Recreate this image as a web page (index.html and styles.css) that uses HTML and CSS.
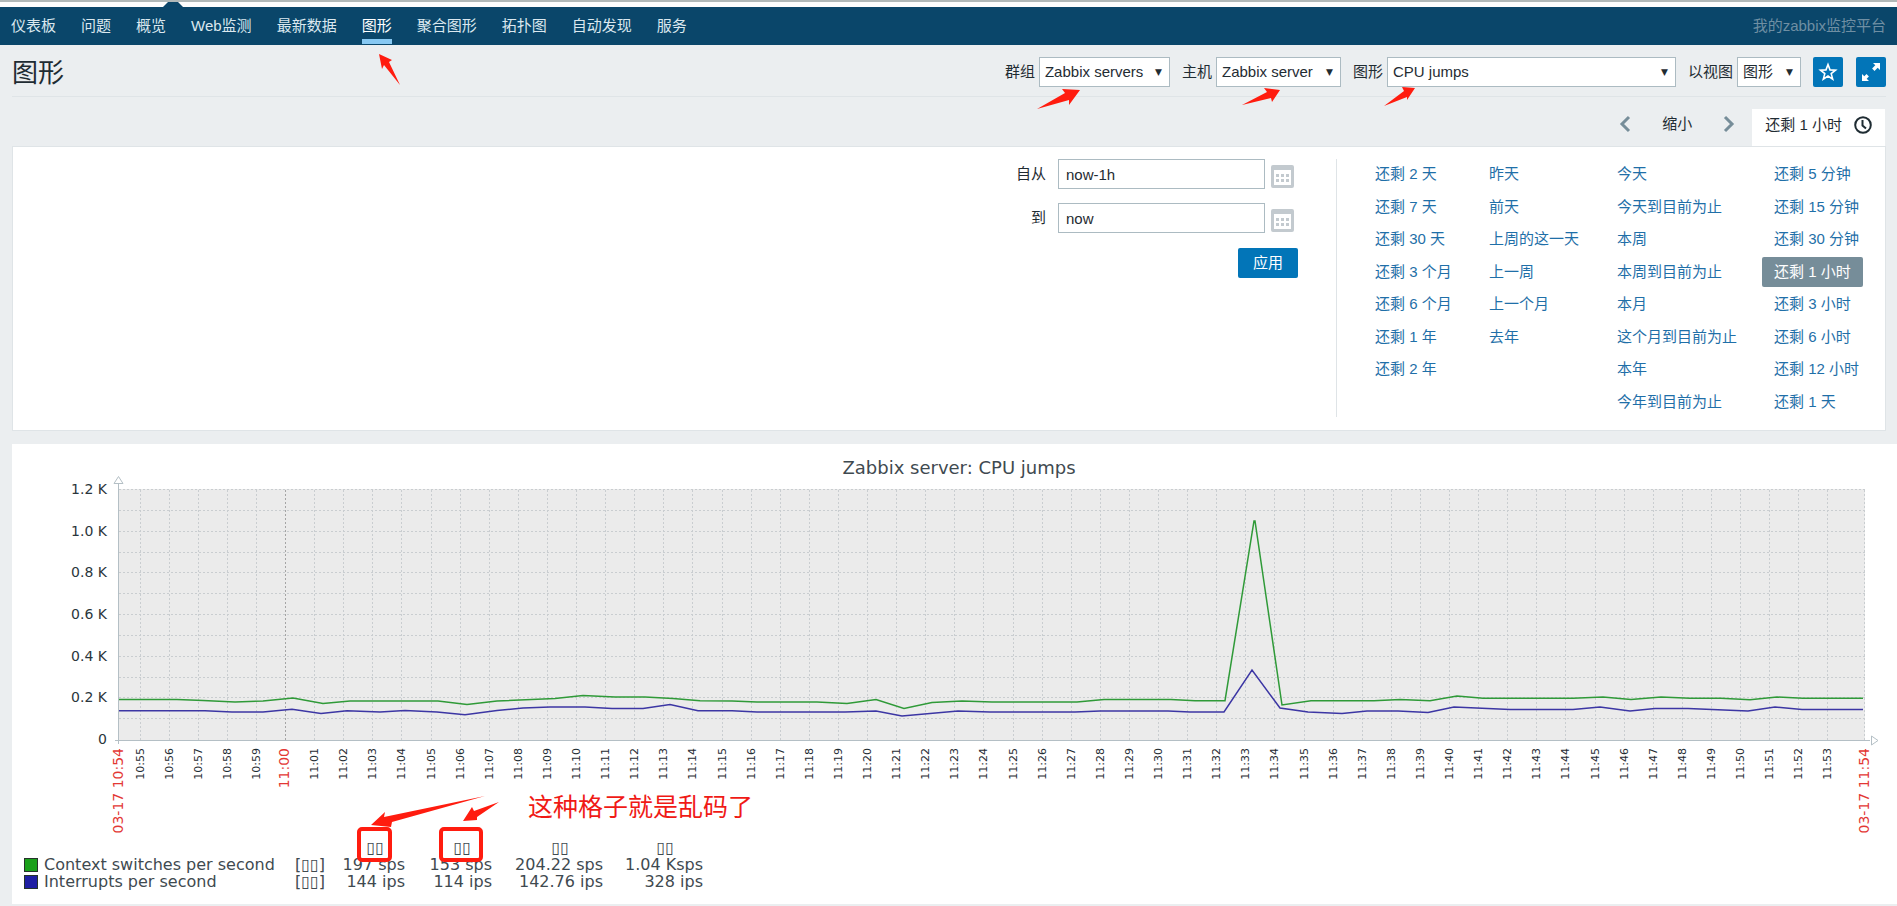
FILE: index.html
```html
<!DOCTYPE html>
<html lang="zh-CN">
<head>
<meta charset="utf-8">
<title>图形</title>
<link rel="stylesheet" href="styles.css">
</head>
<body>
<div class="top-strip"><span class="top-marker"></span></div>
<nav class="nav">
  <a href="#">仪表板</a>
  <a href="#">问题</a>
  <a href="#">概览</a>
  <a href="#">Web监测</a>
  <a href="#">最新数据</a>
  <a href="#" class="current">图形</a>
  <a href="#">聚合图形</a>
  <a href="#">拓扑图</a>
  <a href="#">自动发现</a>
  <a href="#">服务</a>
  <span class="server-name">我的zabbix监控平台</span>
</nav>

<header class="page-header">
  <h1>图形</h1>
  <form class="controls">
    <label for="group">群组</label>
    <span class="select select-group"><select id="group"><option>Zabbix servers</option></select></span>
    <label for="host">主机</label>
    <span class="select select-host"><select id="host"><option>Zabbix server</option></select></span>
    <label for="graph">图形</label>
    <span class="select select-graph"><select id="graph"><option>CPU jumps</option></select></span>
    <label for="view">以视图</label>
    <span class="select select-view"><select id="view"><option>图形</option></select></span>
    <button type="button" class="icon-button" aria-label="收藏">
      <svg width="20" height="20" viewBox="0 0 20 20"><path d="M10 2.500l2 5.400 5.500.2-4.300 3.500 1.500 5.500L10 14l-4.700 3.100 1.500-5.500L2.500 8.100l5.500-.2z" fill="none" stroke="#fff" stroke-width="1.600"/></svg>
    </button>
    <button type="button" class="icon-button" aria-label="全屏">
      <svg width="20" height="20" viewBox="0 0 20 20" fill="#fff"><path d="M12 1h7v7l-2.300-2.300-3.200 3.200-2.400-2.400 3.200-3.200z"/><path d="M8 19H1v-7l2.300 2.300 2.200-2.200 2.400 2.400-2.200 2.200z"/></svg>
    </button>
  </form>
</header>

<main>
  <div class="time-tabs">
    <button type="button" class="plain" aria-label="向前"><svg width="12" height="18" viewBox="0 0 12 18"><path d="M10 2L3 9l7 7" fill="none" stroke="#768d99" stroke-width="3"/></svg></button>
    <button type="button" class="plain zoom-out">缩小</button>
    <button type="button" class="plain" aria-label="向后"><svg width="12" height="18" viewBox="0 0 12 18"><path d="M2 2l7 7-7 7" fill="none" stroke="#768d99" stroke-width="3"/></svg></button>
    <button type="button" class="tab">还剩 1 小时
      <svg width="18" height="18" viewBox="0 0 18 18" fill="none" stroke="#1f2c33" stroke-width="2"><circle cx="9" cy="9" r="7.800"/><path d="M8.500 4v5.500l3.500 3"/></svg>
    </button>
  </div>

  <section class="filter">
    <form class="range">
      <label for="from">自从</label>
      <input id="from" type="text" value="now-1h">
      <button type="button" class="calendar" aria-label="日历"><svg width="23" height="23" viewBox="0 0 23 23"><use href="#cal"/></svg></button>
      <label for="to">到</label>
      <input id="to" type="text" value="now">
      <button type="button" class="calendar" aria-label="日历"><svg width="23" height="23" viewBox="0 0 23 23"><use href="#cal"/></svg></button>
      <button type="button" class="apply">应用</button>
    </form>
    <div class="periods">
      <ul class="col-a">
        <li><a href="#">还剩 2 天</a></li><li><a href="#">还剩 7 天</a></li><li><a href="#">还剩 30 天</a></li><li><a href="#">还剩 3 个月</a></li><li><a href="#">还剩 6 个月</a></li><li><a href="#">还剩 1 年</a></li><li><a href="#">还剩 2 年</a></li>
      </ul>
      <ul class="col-b">
        <li><a href="#">昨天</a></li><li><a href="#">前天</a></li><li><a href="#">上周的这一天</a></li><li><a href="#">上一周</a></li><li><a href="#">上一个月</a></li><li><a href="#">去年</a></li>
      </ul>
      <ul class="col-c">
        <li><a href="#">今天</a></li><li><a href="#">今天到目前为止</a></li><li><a href="#">本周</a></li><li><a href="#">本周到目前为止</a></li><li><a href="#">本月</a></li><li><a href="#">这个月到目前为止</a></li><li><a href="#">本年</a></li><li><a href="#">今年到目前为止</a></li>
      </ul>
      <ul class="col-d">
        <li><a href="#">还剩 5 分钟</a></li><li><a href="#">还剩 15 分钟</a></li><li><a href="#">还剩 30 分钟</a></li><li><a href="#" class="selected">还剩 1 小时</a></li><li><a href="#">还剩 3 小时</a></li><li><a href="#">还剩 6 小时</a></li><li><a href="#">还剩 12 小时</a></li><li><a href="#">还剩 1 天</a></li>
      </ul>
    </div>
  </section>

  <section class="graph">
    <svg class="chart" viewBox="12 444 1885 395">
      <text class="chart-title" x="959" y="474">Zabbix server: CPU jumps</text>
      <rect x="119" y="489" width="1746" height="251" fill="#ebebeb"/>
      <g id="grid"></g>
      <path class="axis" d="M118.500 484V744M115 740.500H1870"/>
      <path class="axis-tip" d="M114 483.500h9l-4.500-7zM1871.500 736v9l6.500-4.500z"/>
      <g id="labels"></g>
      <polyline class="series green" points="119,699.5 177,699.5 203,700.5 235,702 263,701 293,698 323,703.5 350,701 438,701 467,704.5 497,701 555,698.5 583,695.6 615,697 645,697 673,698.5 700,700.7 732,701 757,702 817,702 847,703.5 876,699.5 904,708.5 932,702.5 962,701 992,702 1077,702 1104,699.5 1171,699.5 1195,700.7 1225,700.7 1254,521 1255,521 1282,705 1311,700.7 1374,700.7 1400,699.5 1430,700.7 1457,696 1483,698.3 1573,698.3 1603,697 1631,699.5 1661,697 1690,698.3 1721,698.3 1750,699.7 1777,697 1803,698.3 1863,698.3"/>
      <polyline class="series blue" points="119,710.7 205,710.7 232,712 263,712 292,709.3 321,713.5 347,710.7 380,712 405,710.5 437,712 465,714.7 497,710.5 523,708 550,707 585,707 612,708.5 643,708.5 670,704.5 698,710.7 732,710.7 757,712 845,712 876,711 902,716 930,713.5 958,711 990,712 1075,712 1100,711 1168,711 1190,712 1224,712 1252,670 1280,708 1308,712 1342,713.5 1367,711 1398,711 1428,712.5 1454,707 1510,709.5 1573,709.5 1600,707 1630,711 1655,708.5 1688,708.5 1748,711 1775,707 1802,709.5 1863,709.5"/>
    </svg>
    <table class="legend">
      <thead><tr><th class="name"></th><th class="kind"></th><th class="v1">▯▯</th><th class="v2">▯▯</th><th class="v3">▯▯</th><th class="v4">▯▯</th></tr></thead>
      <tbody>
        <tr><td><span class="swatch swatch-green"></span>Context switches per second</td><td>[▯▯]</td><td class="num">197 sps</td><td class="num">153 sps</td><td class="num">204.22 sps</td><td class="num">1.04 Ksps</td></tr>
        <tr><td><span class="swatch swatch-blue"></span>Interrupts per second</td><td>[▯▯]</td><td class="num">144 ips</td><td class="num">114 ips</td><td class="num">142.76 ips</td><td class="num">328 ips</td></tr>
      </tbody>
    </table>
  </section>
</main>

<svg class="notes" viewBox="0 0 1897 906">
  <defs>
    <g id="cal"><path fill="#c3cacf" fill-rule="evenodd" d="M2 0h19a2 2 0 0 1 2 2v19a2 2 0 0 1-2 2H2a2 2 0 0 1-2-2V2a2 2 0 0 1 2-2zM3 5v15h17V5z"/><path fill="#c3cacf" d="M5 9h3v3H5zM10 9h3v3h-3zM15 9h3v3h-3zM5 14h3v3H5zM10 14h3v3h-3zM15 14h3v3h-3z"/></g>
  </defs>
  <g fill="#ff1c0f">
    <path d="M379 54l13 6-3 2 11 23-16-20-2 4z"/>
    <path d="M1080 90l-18-1 3 4-28 16 32-9v5z"/>
    <path d="M1280 90l-16-2 3 4-25 13 29-7 1 4z"/>
    <path d="M1415 88l-13-1 2 4-20 15 23-9v3z"/>
    <path d="M371 825l14-13-1 5 101-21-93 26-1 5z"/>
    <path d="M463 821l9-14 2 4 25-9-22 15v3z"/>
  </g>
  <g fill="none" stroke="#ff1c0f" stroke-width="4"><rect x="359" y="829" width="31" height="31" rx="3"/><rect x="441" y="829" width="40" height="31" rx="3"/></g>
  <text class="note" x="528" y="816">这种格子就是乱码了</text>
</svg>
<script src="script.js"></script>
</body>
</html>
```
FILE: styles.css
```css
* { box-sizing: border-box; }

body {
  margin: 0;
  position: relative;
  background: #ebeef0;
  color: #1f2c33;
  font: 15px/20px "Liberation Sans", "Noto Sans CJK SC", sans-serif;
}

button, input, select { font: inherit; color: inherit; }
a { text-decoration: none; }

.top-strip {
  position: relative;
  height: 7px;
  background: #fcfdfd;
  border-top: 2px solid #b0b8b8;
}
.top-marker {
  position: absolute;
  left: 163px;
  bottom: 0;
  width: 20px;
  height: 5px;
  background: #0a466a;
  clip-path: polygon(25% 0, 75% 0, 100% 100%, 0 100%);
}

.nav {
  display: flex;
  gap: 25px;
  height: 38px;
  padding: 0 11px;
  background: #0a466a;
}
.nav a {
  padding-top: 9px;
  height: 37px;
  color: #dbe8ef;
}
.nav .current {
  color: #fff;
  border-bottom: 5px solid #87c8f2;
}
.nav .server-name { margin-left: auto; padding-top: 9px; color: #6f8fa3; }

.page-header {
  display: flex;
  align-items: center;
  justify-content: space-between;
  height: 52px;
  margin: 0 11px 0 12px;
  padding-top: 2px;
  border-bottom: 1px solid #dfe4e7;
}
h1 { margin: 0; padding-top: 2px; font-size: 26px; line-height: 36px; font-weight: normal; }

.controls { display: flex; align-items: center; }
.controls label { margin-right: 4px; }
.select { position: relative; margin-right: 12px; }
.select::after {
  content: "▼";
  position: absolute;
  right: 8px;
  top: 5px;
  font: 9px/20px "DejaVu Sans", sans-serif;
  pointer-events: none;
}
.select select {
  display: block;
  appearance: none;
  width: 100%;
  height: 30px;
  padding: 0 5px;
  border: 1px solid #acbbc2;
  border-radius: 0;
  background: #fff;
}
.select-group { width: 131px; }
.select-host { width: 125px; }
.select-graph { width: 289px; }
.select-view { width: 64px; }
.icon-button {
  display: grid;
  place-items: center;
  width: 30px;
  height: 30px;
  padding: 0;
  border: 0;
  border-radius: 2px;
  background: #0275b8;
}
.icon-button + .icon-button { margin-left: 13px; }

.time-tabs {
  display: flex;
  justify-content: flex-end;
  align-items: flex-start;
  margin: 12px 12px 0 12px;
  height: 37px;
}
.plain { padding: 0; border: 0; background: none; height: 30px; }
.plain svg, .tab svg, .calendar svg { display: block; }
.zoom-out { margin: 0 31px; }
.tab {
  display: flex;
  align-items: center;
  gap: 12px;
  height: 37px;
  margin-left: 17px;
  padding: 0 13px 6px;
  border: 0;
  background: #fff;
}

.filter {
  display: flex;
  justify-content: flex-end;
  margin: 0 11px 0 12px;
  padding: 12px 13px;
  height: 285px;
  background: #fff;
  border: 1px solid #dfe4e7;
}
.range {
  display: grid;
  grid-template-columns: 30px 207px 21px;
  grid-template-rows: 30px 30px 30px;
  column-gap: 12px;
  row-gap: 14px;
  margin-right: 38px;
  align-content: start;
}
.range label { text-align: right; line-height: 30px; }
.range input {
  width: 207px;
  height: 30px;
  padding: 0 7px;
  border: 1px solid #acbbc2;
  background: #fff;
}
.calendar { margin-left: -6px; padding: 4px 0 0; border: 0; background: none; width: 23px; height: 30px; }
.apply {
  grid-column: 2 / 4;
  justify-self: end;
  margin-top: 1px;
  width: 60px;
  height: 30px;
  padding: 0;
  border: 0;
  border-radius: 2px;
  background: #0275b8;
  color: #fff;
}
.periods {
  display: flex;
  height: 258px;
  padding-left: 26px;
  border-left: 1px solid #dfe4e7;
}
.periods ul {
  display: grid;
  grid-template-rows: repeat(8, 1fr);
  height: 260px;
  margin: 0;
  padding: 0;
  list-style: none;
}
.periods a {
  display: inline-block;
  padding: 0 12px;
  line-height: 30px;
  border-radius: 2px;
  color: #1f6fa8;
}
.periods .selected { background: #768d99; color: #fff; }
.col-a { width: 114px; }
.col-b { width: 128px; }
.col-c { width: 157px; }
.col-d { width: 110px; }

.graph {
  margin: 13px 0 2px 12px;
  padding-bottom: 14px;
  background: #fff;
}
.chart { display: block; width: 100%; height: auto; font-family: "DejaVu Sans", sans-serif; }
.chart-title { font-size: 18px; text-anchor: middle; fill: #3f4a50; }
.axis { fill: none; stroke: #b4bfc5; }
.axis-tip { fill: #fff; stroke: #b4bfc5; }
.grid-line { stroke: #c9cdd0; stroke-dasharray: 2 2; fill: none; }
.grid-hour { stroke: #a5a5a5; stroke-dasharray: 2 2; }
.y-label { font-size: 14px; text-anchor: end; fill: #2b363c; }
.x-label { font-size: 11px; text-anchor: end; fill: #1f2c33; }
.x-main { font-size: 14px; text-anchor: end; fill: #e33734; }
.series { fill: none; stroke-width: 1.5px; }
.green { stroke: #2f9a38; }
.blue { stroke: #3c36a4; }

.legend {
  margin-left: 12px;
  border-collapse: collapse;
  table-layout: fixed;
  width: 679px;
  font: 16px/17px "DejaVu Sans", sans-serif;
  color: #3f4a50;
}
.legend th, .legend td { padding: 0; height: 17px; font-weight: normal; white-space: nowrap; }
.legend .num { text-align: right; }
.legend .name { width: 271px; }
.legend .kind { width: 26px; }
.legend .v1 { width: 84px; text-align: right; padding-right: 21px; }
.legend .v2 { width: 87px; text-align: right; padding-right: 21px; }
.legend .v3 { width: 111px; text-align: right; padding-right: 34px; }
.legend .v4 { width: 100px; text-align: right; padding-right: 29px; }
.swatch {
  display: inline-block;
  width: 14px;
  height: 14px;
  margin-right: 6px;
  border: 1px solid #26332b;
  vertical-align: -2px;
}
.swatch-green { background: #1aa01a; }
.swatch-blue { background: #1f1fa3; }

.notes {
  position: absolute;
  left: 0;
  top: 0;
  width: 100%;
  pointer-events: none;
}
.note { font-size: 25px; fill: #f01a16; }
```
FILE: script.js
```js
const NS = "http://www.w3.org/2000/svg";
const grid = document.getElementById("grid");
const labels = document.getElementById("labels");

const LEFT = 119, RIGHT = 1865, TOP = 490, BOTTOM = 740;
const MINUTE = (RIGHT - LEFT) / 60;

function line(x1, y1, x2, y2, cls) {
  const el = document.createElementNS(NS, "path");
  el.setAttribute("d", `M${x1} ${y1}L${x2} ${y2}`);
  el.setAttribute("class", cls);
  grid.append(el);
}

function label(text, x, y, cls, upright) {
  const el = document.createElementNS(NS, "text");
  el.textContent = text;
  if (upright) {
    el.setAttribute("x", x);
    el.setAttribute("y", y);
  } else {
    el.setAttribute("transform", `translate(${x} ${y}) rotate(-90)`);
  }
  el.setAttribute("class", cls);
  labels.append(el);
}

for (let i = 1; i <= 12; i++) {
  const y = Math.round(BOTTOM - (i * (BOTTOM - TOP)) / 12) - 0.5;
  line(LEFT, y, RIGHT, y, "grid-line");
}
for (let i = 0; i <= 6; i++) {
  const y = Math.round(BOTTOM - (i * (BOTTOM - TOP)) / 6);
  label(i ? (i / 5).toFixed(1) + " K" : "0", 107, y + 4, "y-label", true);
}

label("03-17 10:54", LEFT + 4, 748, "x-main");
for (let m = 1; m < 60; m++) {
  const x = Math.round(LEFT + 21.5 + (m - 1) * MINUTE) - 0.5;
  const total = 54 + m;
  const hour = 10 + Math.floor(total / 60);
  const text = hour + ":" + String(total % 60).padStart(2, "0");
  const main = total % 60 === 0;
  line(x, TOP, x, BOTTOM, main ? "grid-hour" : "grid-line");
  label(text, x + 3, 748, main ? "x-main" : "x-label");
}
line(RIGHT - 0.5, TOP, RIGHT - 0.5, BOTTOM, "grid-line");
label("03-17 11:54", RIGHT + 4, 748, "x-main");
```
